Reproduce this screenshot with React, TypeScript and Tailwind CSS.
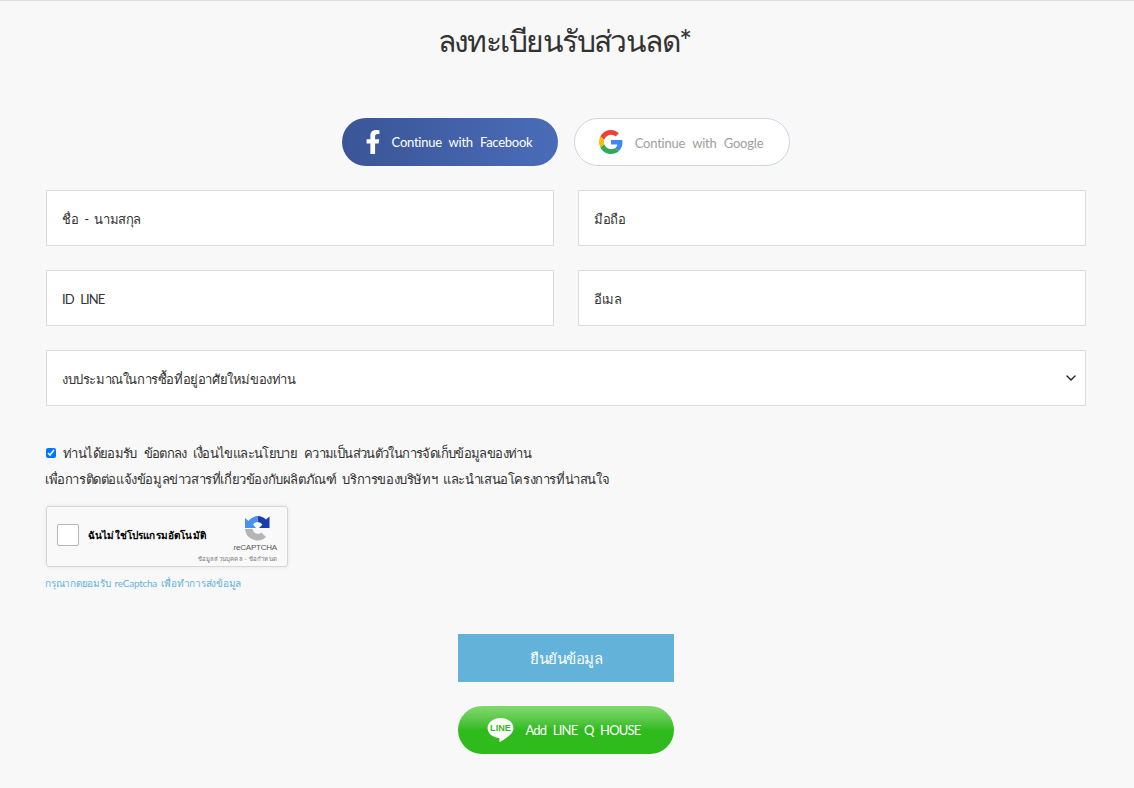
import { ChevronDown } from "lucide-react";

const font = "font-['Lato','Noto_Sans','Open_Sans',sans-serif]";

function Field({ placeholder, tight }: { placeholder: string; tight?: boolean }) {
    return (
        <input
            type="text"
            placeholder={placeholder}
            className={`h-14 w-full border border-[#dcdcdc] bg-white px-[15px] pt-[1px] text-[13px] text-[#333] outline-none placeholder:text-[#333] ${tight ? "tracking-[-0.9px] [word-spacing:4px]" : "tracking-[-0.4px] [word-spacing:3px]"}`}
        />
    );
}

function GoogleLogo() {
    return (
        <svg width="24" height="24" viewBox="0 0 48 48">
            <path fill="#EA4335" d="M24 9.5c3.9 0 6.9 1.6 9.1 3.7l6.7-6.7C35.700 2.700 30.300 0 24 0 14.600 0 6.600 5.400 2.700 13.200l7.800 6.100C12.400 13.600 17.700 9.500 24 9.500z" />
            <path fill="#4285F4" d="M46.900 24.500c0-1.600-.1-3.100-.4-4.500H24v9h12.900c-.6 3-2.200 5.500-4.700 7.200l7.600 5.900c4.400-4.100 7.100-10.100 7.100-17.600z" />
            <path fill="#FBBC05" d="M10.500 28.700c-.5-1.500-.8-3-.8-4.700s.3-3.200.8-4.700l-7.800-6.100C1 16.600 0 20.200 0 24s1 7.400 2.700 10.800l7.800-6.100z" />
            <path fill="#34A853" d="M24 48c6.500 0 11.900-2.100 15.800-5.900l-7.600-5.900c-2.100 1.400-4.900 2.300-8.200 2.300-6.300 0-11.600-4.100-13.500-9.800l-7.800 6.100C6.600 42.600 14.600 48 24 48z" />
        </svg>
    );
}

function RecaptchaLogo() {
    return (
        <svg width="25" height="25" viewBox="0 0 25 25">
            <path fill="#1c3aa9" d="M12.500 0A12.500 12.500 0 0 1 21 3.500L24.500.5V12H14l3.500-3.500A6 6 0 0 0 12.500 6z" />
            <path fill="#4a90f0" d="M12.500 0V6A6 6 0 0 0 8 8.500L11 12H0V2L3.500 5A12.500 12.500 0 0 1 12.500 0z" />
            <path fill="#b5b5b5" d="M0 13H7.500A5.500 5.500 0 0 0 16.500 16.500L21 21A12.500 12.500 0 0 1 0 13z" />
        </svg>
    );
}

export default function App() {
    return (
        <div className={`min-h-[788px] border-t border-[#dedede] bg-[#f8f8f8] ${font}`}>
            <div className="ml-[46px] w-[1040px]">
                <h1 className="pt-[14px] pr-[4px] text-center text-[30px] leading-[50px] font-medium tracking-[-1.55px] text-[#333]">ลงทะเบียนรับส่วนลด*</h1>

                <div className="mt-[53px] flex justify-center gap-4">
                    <a className="flex h-12 w-[216px] items-center justify-center gap-[11px] rounded-full bg-gradient-to-r from-[#3a5597] to-[#4a6cb8] pt-[1px] pr-[3px] text-[13px] tracking-[-0.25px] text-white [word-spacing:4px]">
                        <svg width="16" height="24" viewBox="0 0 320 512" fill="#fff" className="-mt-[1px]">
                            <path d="M279.100 288l14.200-92.700h-88.900v-60.100c0-25.300 12.400-50 52.200-50h40.400V6.300S260.400 0 225.400 0c-73.200 0-121.100 44.400-121.100 124.700v70.600H22.900V288h81.400v224h100.200V288z" />
                        </svg>
                        Continue with Facebook
                    </a>
                    <a className="flex h-12 w-[216px] items-center justify-center gap-3 rounded-full border border-[#cdd5e6] bg-white pt-[3px] pr-[2px] text-[13px] tracking-[-0.2px] text-[#a0a0a0] [word-spacing:4px]">
                        <span className="-mt-[3px]"><GoogleLogo /></span>
                        Continue with Google
                    </a>
                </div>

                <div className="mt-6 grid grid-cols-2 gap-x-6 gap-y-6">
                    <Field placeholder="ชื่อ - นามสกุล" />
                    <Field placeholder="มือถือ" />
                    <Field placeholder="ID LINE" tight />
                    <Field placeholder="อีเมล" />
                    <div className="relative col-span-2 flex h-14 items-center border border-[#dcdcdc] bg-white px-[15px] pt-[3px] text-[13px] tracking-[-0.4px] text-[#333]">
                        งบประมาณในการซื้อที่อยู่อาศัยใหม่ของท่าน
                        <ChevronDown className="absolute top-[19px] right-[6px] h-[16px] w-[16px] text-[#222]" />
                    </div>
                </div>

                <div className="mt-[34px] text-[13px] leading-[26px] tracking-[-0.4px] text-[#333]">
                    <div className="flex items-center gap-[7px] tracking-[-0.62px] [word-spacing:4px]">
                        <input type="checkbox" defaultChecked className="h-[10px] w-[10px] accent-[#0075ff]" />
                        ท่านได้ยอมรับ ข้อตกลง เงื่อนไขและนโยบาย ความเป็นส่วนตัวในการจัดเก็บข้อมูลของท่าน
                    </div>
                    <div className="-ml-px [word-spacing:3px]">เพื่อการติดต่อแจ้งข้อมูลข่าวสารที่เกี่ยวข้องกับผลิตภัณฑ์ บริการของบริษัทฯ และนำเสนอโครงการที่น่าสนใจ</div>
                </div>

                <div className="mt-[14px] flex h-[61px] w-[242px] items-center rounded-[3px] border border-[#d6d6d6] bg-[#f9f9f9] pr-[10px] pl-[10px] shadow-[0_0_4px_rgba(0,0,0,0.08)]">
                    <div className="-mt-[4px] h-[22px] w-[22px] shrink-0 rounded-[2px] border border-[#b5b5b5] bg-white" />
                    <span className="-mt-[2px] ml-[9px] text-[10px] font-semibold tracking-[0.15px] whitespace-nowrap text-black">ฉันไม่ใช่โปรแกรมอัตโนมัติ</span>
                    <div className="mt-[9px] ml-auto flex w-[70px] shrink-0 flex-col items-end self-start">
                        <span className="mr-[7px] block h-[25px]"><RecaptchaLogo /></span>
                        <span className="mt-[2px] font-['Liberation_Sans',sans-serif] text-[8px] leading-[10px] tracking-[-0.2px] text-[#555]">reCAPTCHA</span>
                        <span className="mt-[2px] text-[6px] leading-[8px] tracking-[0.2px] whitespace-nowrap text-[#777]">ข้อมูลส่วนบุคคล - ข้อกำหนด</span>
                    </div>
                </div>

                <p className="-ml-px mt-[8px] text-[10px] leading-[16px] tracking-[-0.25px] text-[#63b3d9] [word-spacing:2px]">กรุณากดยอมรับ reCaptcha เพื่อทำการส่งข้อมูล</p>

                <div className="mt-[43px] flex flex-col items-center gap-6">
                    <button className="h-12 w-[216px] bg-[#62b2d9] pt-[1px] text-[15px] font-medium tracking-[-0.5px] text-white">ยืนยันข้อมูล</button>
                    <a className="flex h-12 w-[216px] items-center justify-center gap-[11px] rounded-full bg-gradient-to-b from-[#82d96e] via-[#2fbb1c] to-[#2fbb1c] pt-[1px] pr-[4px] text-[13px] tracking-[-0.8px] text-white [word-spacing:4px]">
                        <svg width="27" height="24" viewBox="0 0 27 25" className="-mt-[1px]">
                            <path fill="#fff" d="M13.500 0C6 0 0 4.700 0 10.500c0 5.300 4.900 9.700 11.500 10.400.5.100.9.400.9.900l-.1 2.400c0 .6.500.9 1 .6 2.600-1.500 9.200-5.500 11.700-8.900 1.300-1.500 2-3.200 2-5.100C27 4.700 21 0 13.500 0z" />
                            <text x="13.500" y="14" textAnchor="middle" fill="#2fbb1c" fontSize="9.500" fontWeight="700" letterSpacing="0" fontFamily="Liberation Sans, sans-serif">LINE</text>
                        </svg>
                        Add LINE Q HOUSE
                    </a>
                </div>
            </div>
        </div>
    );
}
